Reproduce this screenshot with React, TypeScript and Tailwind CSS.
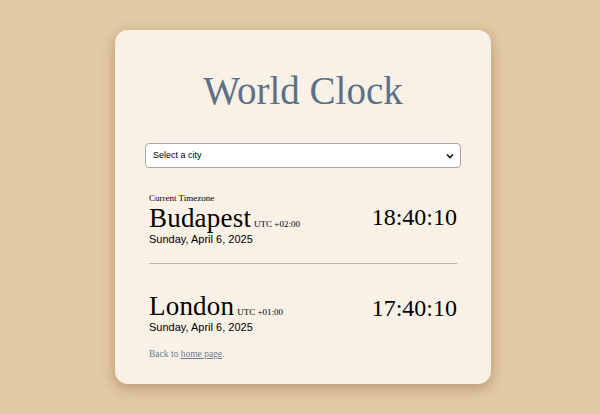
import React from "react";

const serif = { fontFamily: '"Liberation Serif", "Times New Roman", serif' };

function Row({ label, city, utc, date, time, timeTop }: { label?: string; city: string; utc: string; date: string; time: string; timeTop: number }) {
  return (
    <div className="flex items-start justify-between px-[4px]">
      <div className="flex flex-col">
        {label && <div className="text-[9px] leading-[9px] text-black" style={serif}>{label}</div>}
        <div className="flex items-baseline">
          <span className="text-[27px] leading-[30px] tracking-[0.2px] text-black" style={serif}>{city}</span>
          <span className="ml-[3px] text-[9px] text-black" style={serif}>{utc}</span>
        </div>
        <div className="text-[11px] leading-[13px] text-black font-['Liberation_Sans',Arial,sans-serif]">{date}</div>
      </div>
      <div className="text-[24px] leading-[30px] text-black" style={{ ...serif, marginTop: timeTop }}>{time}</div>
    </div>
  );
}

export default function App() {
  return (
    <div className="w-[600px] h-[414px] bg-[#e3c9a4] flex justify-center pt-[30px] pl-[6px]">
      <div className="w-[376px] h-[354px] bg-[#f9f0e6] rounded-[13px] shadow-[0_4px_14px_rgba(90,60,20,0.35)] px-[30px] pt-[37px] flex flex-col">
        <h1 className="text-center text-[39px] leading-[48px] text-[#5a7189]" style={serif}>World Clock</h1>
        <div className="mt-[28px] h-[25px] bg-white border border-[#a8a8a8] rounded-[4px] flex items-center justify-between pl-[7px] pr-[6px]">
          <span className="text-[9px] text-black font-['Liberation_Sans',Arial,sans-serif]">Select a city</span>
          <svg width="8" height="6" viewBox="0 0 8 6" fill="none">
            <path d="M1 1.5 L4 4.5 L7 1.5" stroke="#111" strokeWidth="1.6" />
          </svg>
        </div>
        <div className="mt-[26px]">
          <Row label="Current Timezone" city="Budapest" utc="UTC +02:00" date="Sunday, April 6, 2025" time="18:40:10" timeTop={8} />
        </div>
        <div className="mx-[4px] mt-[17px] h-[1px] bg-[#c2b3a5]" />
        <div className="mt-[27px]">
          <Row city="London" utc="UTC +01:00" date="Sunday, April 6, 2025" time="17:40:10" timeTop={2} />
        </div>
        <div className="mt-[13px] px-[4px] text-[9.5px] leading-[15px] text-[#6a7e93]" style={serif}>
          Back to <a className="underline" href="#">home page</a>.
        </div>
      </div>
    </div>
  );
}
